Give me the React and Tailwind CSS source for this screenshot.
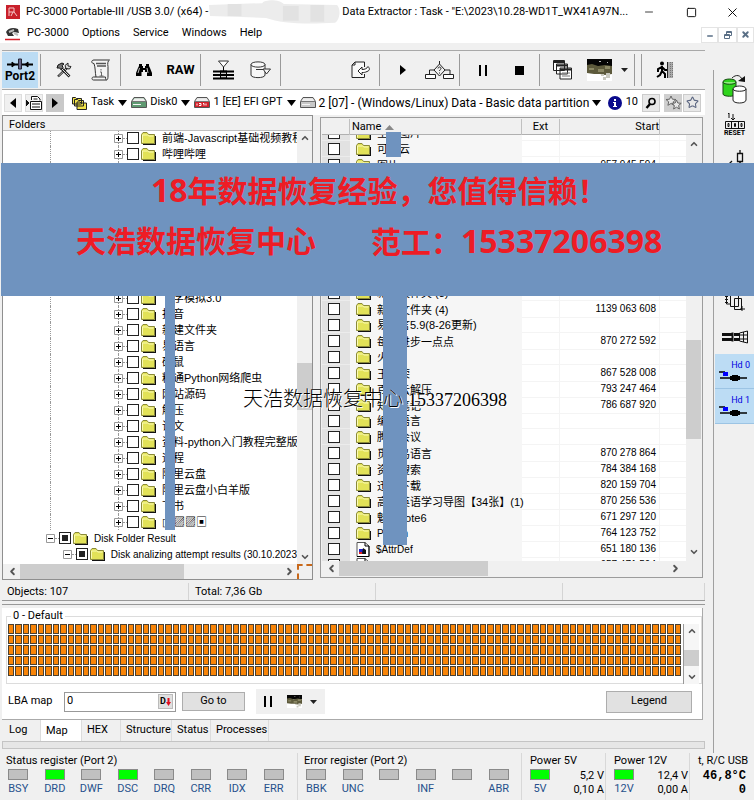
import React, { useState } from 'react';
import { Minus, Square, X, ChevronUp, ChevronDown, ChevronLeft, ChevronRight, Star } from 'lucide-react';

const treeRows = [
  "前端-Javascript基础视频教程", "哔哩哔哩", "", "", "", "", "", "", "", "",
  "飞学模拟3.0", "抖音", "新建文件夹", "易语言", "硕鼠", "精通Python网络爬虫", "网站源码",
  "解压", "论文", "资料-python入门教程完整版(", "远程", "阿里云盘", "阿里云盘小白羊版", "下书", "▯▯▨▨▣",
];

const fileRows = [
  { name: "全部图片" },
  { name: "可达云" },
  { name: "图片", start: "957 945 594" },
  {}, {}, {}, {}, {}, {}, {},
  { name: "新建文件夹 (3)" },
  { name: "新建文件夹 (4)", start: "1139 063 608" },
  { name: "易语言5.9(8-26更新)" },
  { name: "每天进步一点点", start: "870 272 592" },
  { name: "火山" },
  { name: "王者荣", start: "867 528 008" },
  { name: "百度云解压", start: "793 247 464" },
  { name: "知识笔记", start: "786 687 920" },
  { name: "编程语言" },
  { name: "腾讯会议" },
  { name: "觅乐鸟语言", start: "870 278 864" },
  { name: "资源搜索", start: "784 384 168" },
  { name: "迅雷下载", start: "820 159 704" },
  { name: "高中英语学习导图【34张】(1)", start: "870 256 536" },
  { name: "魅蓝note6", start: "671 297 120" },
  { name: "Python", start: "764 123 752", latin: true },
  { name: "$AttrDef", start: "651 180 136", latin: true, file: true },
  { name: "$BadClus", start: "657 471 594", latin: true, file: true },
];

const statusBits = [["BSY", false], ["DRD", true], ["DWF", false], ["DSC", true], ["DRQ", false], ["CRR", false], ["IDX", false], ["ERR", false]];
const errorBits = [["BBK"], ["UNC"], [""], ["INF"], [""], ["ABR"]];

/* ---------- icons ---------- */

const Folder = () => (
  <svg width="15" height="13" viewBox="0 0 15 13" className="shrink-0">
    <path d="M2 12.5h12.5V4" fill="none" stroke="#111" strokeWidth="1.4" />
    <path d="M.5 11.5V2.5L2 .5h4l1.500 2h6v9z" fill="#e2e258" stroke="#8a8a3a" />
    <path d="M1.500 10.500V3h5l1.500 1h4.500" fill="none" stroke="#fafab4" />
  </svg>
);

const FileIcon = () => (
  <svg width="14" height="15" viewBox="0 0 14 15" className="shrink-0">
    <path d="M1 .5h8l4 3.500V14.500H1z" fill="#fff" stroke="#555" />
    <path d="M9 .5V4h4M13 4v10.500H1" fill="none" stroke="#000" />
    <path d="M3 7h4v4H3z" fill="#2222c8" /><path d="M7 6l3 2v4H6z" fill="#111" /><path d="M3 10h3v2H3z" fill="#d22" />
  </svg>
);

const Caret = () => (
  <svg width="9" height="6" viewBox="0 0 9 6" className="shrink-0"><path d="M0 0h9L4.500 6z" fill="#000" /></svg>
);

const SmallCaret = () => (
  <svg width="7" height="4" viewBox="0 0 7 4" className="shrink-0"><path d="M0 0h7L3.500 4z" fill="#222" /></svg>
);

const Photo = ({ w = 25, h = 22 }) => (
  <svg width={w} height={h} viewBox="0 0 25 22" preserveAspectRatio="none">
    <path d="M0 0h25v22H0z" fill="#fff" />
    <path d="M0 0h25v7H0z" fill="#050505" />
    <path d="M0 6l5-1 6 2 7-1 7 1v8l-7 1-5-1-6 0-7-1z" fill="#5d5a3c" />
    <path d="M2 9h5v2H2zM11 10h6v3h-6zM18 7h5v3h-5z" fill="#8b8865" />
    <path d="M14 15h3v2h-3zM19 14h4v5h-4zM16 18h3v3h-3z" fill="#c9c9bf" />
    <path d="M12 2h2v1h-2zM20 3h1v1h-1z" fill="#bbb" />
  </svg>
);

const Drive = ({ color = "#c8c8c8", red }) => (
  <svg width="16" height="11" viewBox="0 0 16 11" className="shrink-0">
    <path d="M.5 4.500L3 .5h10l2.500 4v6H.5z" fill={color} stroke="#555" />
    <path d="M1.500 4L3.500 1.300h9L14.500 4z" fill="#eee" />
    <path d="M.5 4.500h15" stroke="#777" />
    {red ? <path d="M1 5h14v5H1z" fill="#d3202a" /> : <path d="M2 7.500h8" stroke="#f4f4f4" />}
    {red && <path d="M3 6.500v2M5 6.500h2v2H5M9 6.500h1v2M12 6.500v2" fill="none" stroke="#fff" />}
  </svg>
);

const PortIcon = () => (
  <svg width="26" height="12" viewBox="0 0 26 12" className="shrink-0">
    <path d="M0 6.500h26" stroke="#000" strokeWidth="2" />
    <path d="M5 4l3 2.500L5 9zM21 4l-3 2.500L21 9z" fill="#000" stroke="#000" />
    <path d="M11.500 1h3v10h-3z" fill="#668" stroke="#223" />
  </svg>
);

const Tools = () => (
  <svg width="16" height="16" viewBox="0 0 16 16" fill="none">
    <path d="M2 14.500L11 6" stroke="#222" strokeWidth="2.400" /><path d="M2.500 14L10 7" stroke="#eee" strokeWidth=".8" />
    <path d="M10 6.500L9 3.500 12 1v3l3 .500-1.500 2.500z" fill="#ddd" stroke="#222" />
    <path d="M5 6l8.500 8.500" stroke="#222" strokeWidth="2.600" /><path d="M6 7l7 7" stroke="#ddd" />
    <path d="M1 6l1-3 4-2 2 1-2 1.500 1 2-2 2-1.500-1.500z" fill="#777" stroke="#111" />
  </svg>
);

const Scroll = () => (
  <svg width="21" height="22" viewBox="0 0 21 22" fill="none" stroke="#333">
    <path d="M4 4.500C1 4.500 1 1 4 1h15.500c-2 1-2 4-1.500 6.500V17c0 4-1 4-2 4H3.500c-2 0-2-3 0-3H6c-1-5-.5-9-2-13.500z" fill="#f4f4f4" />
    <path d="M6 4.500h10M7 7h9" strokeWidth="1.500" stroke="#555" /><path d="M6 18h9.500c0 2 .5 3 1 3" />
    <path d="M11 10v1.500M10 13h1.500v4M9.500 17h4" stroke="#666" />
  </svg>
);

const Binoculars = () => (
  <svg width="16" height="14" viewBox="0 0 16 14">
    <path d="M3 1h3v2h1v2h2V3h1V1h3v2l1 2 2 5v3h-5V9H9V7H7v2H5.500v4H0v-3l2-5 1-2z" fill="#000" />
    <path d="M3.500 5L2 10M11 5l1 5" stroke="#eee" strokeWidth=".8" />
  </svg>
);

const Stack = () => (
  <svg width="21" height="20" viewBox="0 0 21 20">
    <path d="M5.500 1h10l-5 6z" fill="#fff" stroke="#333" />
    <path d="M10.500 7v4" stroke="#000" />
    <path d="M0 11.500h21M0 15h21M0 18.500h21" fill="none" stroke="#000" strokeWidth="2" />
    <path d="M7 10.500h7v8H7z" fill="#000" /><path d="M8 13.300h5M8 16.700h5" stroke="#fff" />
  </svg>
);

const CylArrow = () => (
  <svg width="21" height="18" viewBox="0 0 21 18" fill="none" stroke="#333">
    <path d="M1 3.500C1 0 15 0 15 3.500V14c0 3.500-14 3.500-14 0z" fill="#f7f7f7" /><path d="M1 3.500C1 7 15 7 15 3.500" />
    <path d="M6 8.500h7M13 8h7.500l-4 5z" fill="#f7f7f7" />
  </svg>
);

const PageArrow = () => (
  <svg width="20" height="18" viewBox="0 0 20 18" fill="none" stroke="#222">
    <path d="M13.500 6V1H4L1 4v12.500h12.500V13" fill="#f8f8f8" /><path d="M1 4h3V1" />
    <path d="M7 10l4-4v2.500c3 0 5-1 6-3 2 2 2 4-1 5-2 1-3 1-5 1V14z" fill="#fff" />
  </svg>
);

const FlowIcon = () => (
  <svg width="29" height="19" viewBox="0 0 29 19" fill="none" stroke="#222">
    <path d="M14.500 0v3M14.500 3L20 9l-5.500 6L9 9zM9 9H4.500v4M20 9h5v4" />
    <path d="M.5 13.500h10v4H.5zM18.500 13.500h10v4h-10z" fill="#fff" />
    <path d="M13 7.500c0-2 3-2 3 0 0 1-1.500 1-1.500 2.500M14.500 11.500v1" />
  </svg>
);

const WindowsIcon = () => (
  <svg width="19" height="20" viewBox="0 0 19 20" fill="#fff" stroke="#222">
    <path d="M.5.5h11v10H.5zM3.500 4h11v10h-11zM7 8h11.500v11H7z" />
    <path d="M.5 2h11M3.500 5.500h11M7 9.500h11.500" strokeWidth="2" /><path d="M9 13h8M9 16h8" stroke="#777" />
  </svg>
);

const ExitIcon = () => (
  <svg width="18" height="18" viewBox="0 0 18 18">
    <path d="M12 1h5v16h-5z" fill="#aaa" /><path d="M11.500 1v16" stroke="#222" /><path d="M14.500 1v16M16.500 1v16" stroke="#777" strokeDasharray="1 1" />
    <circle cx="6" cy="2.500" r="2" /><path d="M6 5v6M6 6L2 8v3M6 6l3 3h2M6 10l-2 4-3 2M6 10l3 3v4" fill="none" stroke="#000" strokeWidth="2" />
  </svg>
);

const Cylinders = () => (
  <svg width="25" height="29" viewBox="0 0 25 29">
    <path d="M10 3c4-4 9-3 10 2" fill="none" stroke="#222" /><path d="M16 6l7-5v6z" fill="#111" />
    <path d="M1 7c0-4 13-4 13 0v12c0 3-13 3-13 0z" fill="#2fd41c" stroke="#174c12" /><path d="M1 7c0 3 13 3 13 0" fill="#8df07c" stroke="#174c12" />
    <path d="M11 14c0-4 13-4 13 0v11c0 4-13 4-13 0z" fill="#fff" stroke="#222" /><path d="M11 14c0 3 13 3 13 0" fill="none" stroke="#222" />
  </svg>
);

const ResetTop = () => (
  <svg width="20" height="17" viewBox="0 0 20 17" fill="none" stroke="#111">
    <path d="M3 2l1-1v5M8 2v6M6 6l2 2 2-2" /><path d="M.5 9.500h19M.5 16.500h19M.5 9.500v7M6.500 9.500v7M13.500 9.500v7M19.500 9.500v7" />
    <path d="M3 11.500h1v3H3zM9.500 11.500h1v3h-1zM16 11.500h1v3h-1z" />
  </svg>
);

const Relay = () => (
  <svg width="22" height="20" viewBox="0 0 22 20" fill="none" stroke="#111">
    <path d="M16 0v3M13.500 3.500h5v8h-5zM16 12v3M0 15h4l4-4M11 15h11" strokeWidth="1.300" /><circle cx="16" cy="15" r="2" fill="#111" />
  </svg>
);

const Pages = () => (
  <svg width="20" height="20" viewBox="0 0 20 20" fill="#f0f0f0" stroke="#111">
    <path d="M1.500 1h8v11h-8z" /><path d="M0 4.500h3M0 7.500h3M0 10.500h3" /><path d="M5.500 3.500h8v11h-8zM9.500 6.500h7v11h-7z" /><path d="M17 14v5M15 17h5" />
  </svg>
);

const Connectors = () => (
  <svg width="26" height="14" viewBox="0 0 26 14" stroke="#111" fill="none">
    <path d="M0 4.500h10M0 9.500h10" strokeWidth="3" /><path d="M10.500 2.500v9" strokeWidth="2" /><path d="M12 4.500h6M12 9.500h6" strokeWidth="3" />
    <path d="M17.500 3l8-2v12l-8-2zM18 5h7M18 9h7M21.500 2v10" />
  </svg>
);

const HeadPlug = () => (
  <svg width="28" height="11" viewBox="0 0 28 11">
    <path d="M0 1h6M1 7h27" stroke="#000" strokeWidth="1.500" /><path d="M4 1h5v4H4z" fill="#00f" />
    <path d="M11 5h2V4h6v1h2v4h-2v1h-6V9h-2z" fill="#000" />
  </svg>
);

const TaskFolders = () => (
  <svg width="15" height="14" viewBox="0 0 15 14" fill="#f0e24a" stroke="#222">
    <path d="M.5 8V1.500h3l1 1h5V8zM2.500 10V3.500h3l1 1h5V10zM5 13.500V6h3l1 1h5.500v6.500z" />
  </svg>
);

const FindDoc = () => (
  <svg width="16" height="14" viewBox="0 0 16 14" fill="#fff" stroke="#111">
    <path d="M0 4l3 3-3 3z" fill="#111" /><path d="M5.500 4V.5h6L14 3v1.500M4.500 5.500h11v8h-11z" /><path d="M6 8h8M6 11h8M7.500 3h4" />
  </svg>
);

const PlayTri = ({ flip }) => (
  <svg width="6" height="10" viewBox="0 0 6 10"><path d={flip ? "M6 0v10L0 5z" : "M0 0v10l6-5z"} /></svg>
);

const Pause = () => (
  <svg width="8" height="11" viewBox="0 0 8 11"><path d="M0 0h2v11H0zM6 0h2v11H6z" /></svg>
);

/* ---------- small parts ---------- */

function ToolButton({ label, children }) {
  return (
    <button aria-label={label} className="w-[37px] h-9 flex items-center justify-center shrink-0">{children}</button>
  );
}

function ToolGroup({ children }) {
  return <div className="flex w-20 h-8 pl-1 items-center border-r border-[#9a9a9a] shrink-0">{children}</div>;
}

function Plus({ minus }) {
  return (
    <svg width="9" height="9" viewBox="0 0 9 9" className="shrink-0">
      <path d="M.5.5h8v8h-8z" fill="#fff" stroke="#999" />
      <path d={minus ? "M2 4.500h5" : "M2 4.500h5M4.500 2v5"} stroke="#000" />
    </svg>
  );
}

const tick = "appearance-none size-3 shrink-0 border border-[#222] bg-white";

function TreeRow({ name }) {
  return (
    <div className="flex h-4 items-center shrink-0">
      <span className="w-[47px] shrink-0" />
      <span className="w-16 self-stretch border-l border-dotted border-[#999] shrink-0" />
      <span className="w-[9px] self-stretch flex flex-col items-center shrink-0">
        <i className="flex-1 border-l border-dotted border-[#999]" />
        <Plus />
        <i className="flex-1 border-l border-dotted border-[#999]" />
      </span>
      <span className="w-1 border-t border-dotted border-[#999] shrink-0" />
      <input type="checkbox" aria-label={name || "folder"} className={tick} />
      <span className="ml-0.5 flex"><Folder /></span>
      <span className="ml-1.5 text-[11px] leading-4 whitespace-nowrap">{name}</span>
    </div>
  );
}

function Led({ on }) {
  return <span className={`w-5 h-[11px] border border-[#8a8a8a] ${on ? "bg-[#00ff00]" : "bg-[#c0c0c0]"}`} />;
}

function Register({ title, bits, cols, className }) {
  return (
    <section className={`flex flex-col border-r border-[#d8d8d8] ${className}`}>
      <h2 className="px-1.5 leading-4 whitespace-nowrap">{title}</h2>
      <div className={`grid ${cols}`}>
        {bits.map(([label, on], i) => (
          <div key={i} className="flex flex-col items-center gap-px">
            <Led on={on} />
            <span className="leading-4 text-[#27508c]">{label}</span>
          </div>
        ))}
      </div>
    </section>
  );
}

function Power({ title, volt, value, amps }) {
  return (
    <section className="w-21 flex flex-col pl-2 pr-px border-r border-[#d8d8d8]">
      <h2 className="leading-4 whitespace-nowrap">{title}</h2>
      <div className="flex justify-between">
        <div className="flex flex-col items-center gap-px">
          <Led on />
          <span className="leading-4 text-[#27508c]">{volt}</span>
        </div>
        <div className="text-right leading-[14px]"><p>{value}</p><p>{amps}</p></div>
      </div>
    </section>
  );
}

export default function App() {
  const [tab, setTab] = useState("Map");
  const [lba, setLba] = useState("0");

  return (
    <div className="relative flex flex-col w-full h-screen overflow-hidden bg-[#f0f0f0] text-black text-[11px] font-['Roboto','Noto_Sans_CJK_SC',sans-serif]">

      {/* title bar */}
      <header className="flex items-center h-6 pl-1.5 bg-white shrink-0 whitespace-nowrap">
        <svg width="14" height="14" viewBox="0 0 14 14" className="shrink-0">
          <path d="M0 0h14v14H0z" fill="#c9202b" /><path d="M3 11V3h5v4l3 4M3 7h5M5 11l2-4" fill="none" stroke="#f6c9cb" />
        </svg>
        <span className="ml-1.5">PC-3000 Portable-III /USB 3.0/ (x64) -</span>
        <svg width="134" height="24" viewBox="0 0 136 24" className="shrink-0">
          <path d="M1 5l54-2c3-4 18-4 22 1l54 1c4 4 3 15-2 18-35 2-55 0-70-5L2 16z" fill="#ececec" />
          <path d="M20 4h14v12H20zM76 6h16v15H76zM104 5h14v17h-14z" fill="#e2e2e2" />
        </svg>
        <span>Data Extractor : Task - "E:\2023\10.28-WD1T_WX41A97N...</span>
        <div className="ml-auto pr-1 flex items-center">
          <button aria-label="Minimize" className="w-[42px] flex justify-center"><Minus size={12} strokeWidth={1.500} /></button>
          <button aria-label="Maximize" className="w-[42px] flex justify-center"><Square size={11} strokeWidth={2} /></button>
          <button aria-label="Close" className="w-10 flex justify-center"><X size={15} strokeWidth={1.500} /></button>
        </div>
      </header>

      {/* menu */}
      <nav className="flex items-center h-[19px] pl-[5px] bg-white shrink-0">
        <svg width="15" height="14" viewBox="0 0 15 14" className="shrink-0">
          <path d="M1 5c2-4 7-5 12-3l1 4-5-1-2 1 2 3H3z" fill="#333" /><path d="M4 5l5-2M9 6l4 2" stroke="#bbb" strokeWidth="2" /><path d="M0 12.500h15" stroke="#d5202b" strokeWidth="1.500" />
        </svg>
        <div className="flex ml-[7px] gap-[13px]">
          {["PC-3000", "Options", "Service", "Windows", "Help"].map(m => <button key={m}>{m}</button>)}
        </div>
        <div className="ml-auto flex h-4 mt-0.5 text-[#5a6f86]">
          <button aria-label="Minimize task" className="w-[17px] border border-[#e4e4e4] flex items-end justify-center pb-0.5"><Minus size={8} strokeWidth={4} /></button>
          <button aria-label="Restore task" className="w-[19px] border border-[#e4e4e4] flex items-center justify-center">
            <svg width="8" height="8" viewBox="0 0 8 8" fill="#fff" stroke="currentColor"><path d="M2.500.5h5v4h-5zM.5 3.500h5v4h-5zM2.500 1.500h5M.5 4.500h5" /></svg>
          </button>
          <button aria-label="Close task" className="w-[17px] border border-[#e4e4e4] flex items-center justify-center"><X size={9} strokeWidth={5} /></button>
        </div>
      </nav>

      <div className="flex flex-1 min-h-0">
        <main className="flex flex-col flex-1 min-w-0 pt-[7px] pl-0.5">

          {/* toolbar */}
          <div className="flex items-center h-10 border-t border-b border-[#a8a8a8] shrink-0">
            <button className="w-9 h-9 flex flex-col items-center justify-center bg-[#bcdcf4] text-xs leading-3 font-bold whitespace-nowrap shrink-0"><PortIcon />Port2</button>
            <div className="w-[3px] h-8 border-r border-[#9a9a9a]" />
            <ToolGroup>
              <ToolButton label="Utilities"><Tools /></ToolButton>
              <ToolButton label="Info"><Scroll /></ToolButton>
            </ToolGroup>
            <ToolGroup>
              <ToolButton label="Find"><Binoculars /></ToolButton>
              <button className="w-[37px] h-9 text-[13px] font-bold">RAW</button>
            </ToolGroup>
            <ToolGroup>
              <ToolButton label="Heads"><Stack /></ToolButton>
              <ToolButton label="Copy disk"><CylArrow /></ToolButton>
            </ToolGroup>
            <div className="flex flex-1 h-8 items-center justify-end border-r border-[#9a9a9a]">
              <ToolButton label="Export"><PageArrow /></ToolButton>
            </div>
            <ToolGroup>
              <ToolButton label="Start"><PlayTri /></ToolButton>
              <ToolButton label="Flow"><FlowIcon /></ToolButton>
            </ToolGroup>
            <ToolGroup>
              <ToolButton label="Pause"><Pause /></ToolButton>
              <ToolButton label="Stop"><svg width="9" height="9" viewBox="0 0 9 9"><path d="M0 0h9v9H0z" /></svg></ToolButton>
            </ToolGroup>
            <div className="flex w-[95px] h-8 pl-1 items-center border-r border-[#9a9a9a] shrink-0">
              <ToolButton label="Windows"><WindowsIcon /></ToolButton>
              <ToolButton label="Map picture"><Photo /></ToolButton>
              <button aria-label="Picture menu" className="w-3 h-9 flex items-center justify-center"><SmallCaret /></button>
            </div>
            <div className="w-[7px] h-8 border-r border-[#9a9a9a] shrink-0" />
            <div className="flex w-[63px] pl-1 shrink-0"><ToolButton label="Exit"><ExitIcon /></ToolButton></div>
          </div>

          {/* object path */}
          <div className="flex items-center h-[25px] bg-white whitespace-nowrap shrink-0">
            <div className="flex gap-[3px] pl-0.5">
              <button aria-label="Back" className="size-[18px] border border-[#ddd] bg-[#f0f0f0] flex items-center justify-center"><PlayTri flip /></button>
              <button aria-label="Go to object" className="size-[18px] border border-[#ddd] bg-[#f0f0f0] flex items-center justify-center"><FindDoc /></button>
              <button aria-label="Forward" className="size-[18px] bg-[#c9c9c9] flex items-center justify-center"><PlayTri /></button>
            </div>
            <button className="ml-2 flex items-center gap-1"><TaskFolders />Task<Caret /></button>
            <button className="ml-1 flex items-center gap-[3px]"><Drive color="#5f9a72" />Disk0<Caret /></button>
            <button className="ml-1 flex items-center gap-1"><Drive red />1 [EE] EFI GPT<Caret /></button>
            <button className="ml-1 flex items-center gap-[3px]"><Drive /><span className="text-xs">2 [07] - (Windows/Linux) Data - Basic data partition</span><Caret /></button>
            <div className="ml-auto flex items-center pr-1">
              <svg width="14" height="14" viewBox="0 0 14 14"><circle cx="7" cy="7" r="7" fill="#0a0a8c" /><path d="M6 3h2v2H6zM5 6h3v4h1v1H5v-1h1V7H5z" fill="#fff" /></svg>
              <span className="ml-1 mr-1">10</span>
              <button aria-label="Search" className="size-[18px] mr-1 border border-[#ccc] bg-[#e8e8e8] flex items-center justify-center">
                <svg width="12" height="12" viewBox="0 0 12 12" fill="none" stroke="#000"><circle cx="7" cy="4.500" r="3" strokeWidth="1.600" /><path d="M5 7L1.500 11" strokeWidth="2.400" /></svg>
              </button>
              <button aria-label="Favourites" className="size-[18px] mr-px bg-[#cfcfcf] flex items-center justify-center">
                <svg width="17" height="16" viewBox="0 0 17 16" fill="#e8e8e8" stroke="#666"><path d="M6 1l1.400 3.200 3.600.3-2.700 2.300.8 3.500L6 8.500 2.900 10.300l.8-3.500L1 4.500l3.600-.3z" /><path d="M11.500 5l1.300 3 3.400.3-2.600 2.200.8 3.500-2.900-1.800L8.600 14l.8-3.500-2.600-2.200L10.200 8z" /></svg>
              </button>
              <button aria-label="Add star" className="size-[18px] border border-[#ccc] bg-[#e8e8e8] flex items-center justify-center"><Star size={13} strokeWidth={2} className="text-[#5a6580]" /></button>
            </div>
          </div>

          {/* folders + files */}
          <div className="flex flex-1 min-h-0">
            <section className="flex flex-col w-[311px] shrink-0 border border-[#8f8f8f] bg-white">
              <h2 className="h-[15px] pl-1.5 leading-[17px] bg-[#f0f0f0] border-b border-[#c0c0c0] shrink-0">Folders</h2>
              <div className="flex flex-1 min-h-0">
                <div className="flex-1 min-w-0 overflow-hidden">
                  <div className="-mt-px flex flex-col font-['Liberation_Sans','Noto_Sans_CJK_SC',sans-serif]">
                    {treeRows.map((r, i) => <TreeRow key={i} name={r} />)}
                    <div className="flex h-4 items-center pl-[43px] text-[10px] whitespace-nowrap shrink-0">
                      <Plus minus /><span className="w-1 border-t border-dotted border-[#999]" />
                      <input type="checkbox" defaultChecked aria-label="Disk Folder Result" className={`${tick} checked:bg-[#222] checked:shadow-[inset_0_0_0_2px_white]`} />
                      <span className="ml-0.5 mr-1.5"><Folder /></span>Disk Folder Result
                    </div>
                    <div className="flex h-4 items-center pl-[60px] text-[10px] whitespace-nowrap shrink-0">
                      <Plus minus /><span className="w-1 border-t border-dotted border-[#999]" />
                      <input type="checkbox" defaultChecked aria-label="Attempt results" className={`${tick} checked:bg-[#222] checked:shadow-[inset_0_0_0_2px_white]`} />
                      <span className="ml-0.5 mr-1.5"><Folder /></span>Disk analizing attempt results (30.10.2023
                    </div>
                    <div className="flex h-4 items-center pl-[77px] text-[10px] whitespace-nowrap shrink-0">
                      <Plus /><span className="w-1 border-t border-dotted border-[#999]" />
                      <input type="checkbox" aria-label="NTFS boot" className={tick} />
                      <span className="ml-1 mr-2 size-3 rounded-full border-2 border-[#1414a0]" />1007 - NTFS (Boot, NTFS Search) (Fil
                    </div>
                  </div>
                </div>
                <div className="w-[15px] flex flex-col items-center justify-between py-0.5 bg-[#f0f0f0] text-[#555]">
                  <ChevronUp size={10} strokeWidth={4} />
                  <div className="flex flex-col flex-1 w-full">
                    <div className="flex-[220]" /><div className="h-[47px] bg-[#cdcdcd]" /><div className="flex-[142]" />
                  </div>
                  <ChevronDown size={10} strokeWidth={4} />
                </div>
              </div>
              <div className="flex h-[15px] bg-[#f0f0f0] text-[#555] shrink-0">
                <div className="flex flex-1 items-center pl-1 pr-0.5">
                  <ChevronLeft size={11} strokeWidth={4} />
                  <div className="flex flex-1 pl-0.5 self-stretch"><div className="w-[62%] bg-[#cdcdcd]" /></div>
                  <ChevronRight size={11} strokeWidth={4} />
                </div>
                <div className="w-[15px] border-t-2 border-l-2 border-dashed border-[#c8681a]" />
              </div>
            </section>

            <section className="flex flex-col flex-1 min-w-0 ml-[7px] mr-0.5 my-0.5 border border-[#9c9c9c] bg-[#f0f0f0] p-px">
              <div className="flex flex-1 min-h-0">
                <table className="flex flex-col flex-1 min-w-0 font-['Liberation_Sans','Noto_Sans_CJK_SC',sans-serif]">
                  <thead className="block shrink-0 font-['Roboto',sans-serif]">
                    <tr className="grid grid-cols-[28px_172px_38px_1fr_26px] h-4 border-b border-[#b0b0b0] leading-4">
                      <th className="border-r border-[#c0c0c0]" />
                      <th className="flex items-center gap-1 pl-0.5 font-normal border-r border-[#c0c0c0]">Name
                        <svg width="9" height="5" viewBox="0 0 9 5"><path d="M0 5h9L4.500 0z" fill="#888" /></svg>
                      </th>
                      <th className="font-normal border-r border-[#c0c0c0]">Ext</th>
                      <th className="font-normal text-right border-r border-[#c0c0c0]">Start</th>
                      <th />
                    </tr>
                  </thead>
                  <tbody className="block flex-1 min-h-0 overflow-hidden bg-white">
                    {fileRows.map((f, i) => (
                      <tr key={i} className="grid grid-cols-[28px_172px_38px_1fr_26px] h-4 first:-mt-2.5">
                        <td className="flex items-center pl-1.5 bg-[#e2e2e2] border-b border-[#ececec]"><input type="checkbox" aria-label={f.name || "item"} className={tick} /></td>
                        <td className={`flex items-center gap-1.5 pl-1.5 bg-[#f6f6f6] leading-4 whitespace-nowrap ${f.latin ? "text-[10px]" : "text-[11px]"}`}>
                          {f.file ? <FileIcon /> : <Folder />}{f.name}
                        </td>
                        <td className="border-b border-r border-[#f4f4f4]" />
                        <td className="border-b border-r border-[#f4f4f4] pr-[3px] text-right text-[10px] leading-4">{f.start}</td>
                        <td className="border-b border-[#f4f4f4]" />
                      </tr>
                    ))}
                  </tbody>
                </table>
                <div className="w-[15px] flex flex-col">
                  <div className="h-4 border-b border-[#b0b0b0]" />
                  <div className="flex flex-col flex-1 items-center py-1 text-[#555]">
                    <ChevronUp size={10} strokeWidth={4} />
                    <div className="flex flex-col flex-1 w-full">
                      <div className="flex-[191]" /><div className="h-[99px] bg-[#cdcdcd]" /><div className="flex-[108]" />
                    </div>
                    <ChevronDown size={10} strokeWidth={4} />
                  </div>
                </div>
              </div>
              <div className="flex items-center h-[15px] pl-1 pr-5 text-[#555] shrink-0">
                <ChevronLeft size={11} strokeWidth={4} />
                <div className="flex flex-1 pl-0.5 self-stretch"><div className="w-[45%] bg-[#cdcdcd]" /></div>
                <ChevronRight size={11} strokeWidth={4} />
              </div>
            </section>
          </div>

          {/* status bar */}
          <div className="grid grid-cols-[187px_187px_187px_1fr] h-[17px] mt-[3px] leading-[18px] shrink-0">
            <span className="pl-[5px] border-r border-[#d4d4d4]">Objects: 107</span>
            <span className="pl-1.5 border-r border-[#d4d4d4]">Total: 7,36 Gb</span>
            <span className="border-r border-[#d4d4d4]" />
            <span className="border-r border-[#d4d4d4]" />
          </div>
          <div className="h-[5px] border-t border-b border-[#999] shrink-0" />

          {/* map */}
          <section className="flex flex-col h-28 mt-[3px] mr-0.5 bg-white border-b border-r border-[#aaa] shrink-0">
            <fieldset className="h-[76px] ml-1 border border-[#dcdcdc]">
              <legend className="ml-1 px-0.5 leading-4">0 - Default</legend>
              <div className="flex w-full h-[60px]">
                <div className="flex-1 grid grid-cols-[repeat(90,minmax(0,1fr))] gap-x-px gap-y-px h-[52px] pl-px pr-0.5">
                  {Array.from({ length: 450 }, (_, i) => <i key={i} className="bg-[#f98508] border border-[#4a4030]" />)}
                </div>
                <div className="w-4 mr-0.5 flex flex-col items-center justify-between py-0.5 border-l border-[#999] bg-[#f6f6f6] text-[#555]">
                  <ChevronUp size={10} strokeWidth={4} />
                  <div className="w-full h-4 mt-2 bg-[#cdcdcd]" />
                  <ChevronDown size={10} strokeWidth={4} />
                </div>
              </div>
            </fieldset>
            <div className="flex items-center flex-1 pl-1.5 pr-2.5">
              <label htmlFor="lba" className="w-14">LBA map</label>
              <div className="flex items-center w-28 h-5 border border-[#999]">
                <input id="lba" value={lba} onChange={e => setLba(e.target.value)} className="flex-1 min-w-0 pl-0.5 outline-none" />
                <button aria-label="Decimal" className="flex items-center w-[15px] h-[15px] mr-0.5 pl-px bg-[#e0e0e0] border border-[#bbb] text-[9px] font-bold">D
                  <svg width="5" height="8" viewBox="0 0 5 8"><path d="M1.500 0h2v4H5L2.500 8 0 4h1.500z" fill="#e01020" /></svg>
                </button>
              </div>
              <button className="w-[63px] h-[19px] ml-1.5 bg-[#e1e1e1] border border-[#adadad]">Go to</button>
              <div className="flex items-center h-[25px] ml-[11px] w-[69px] pl-2 bg-[#f0f0f0]">
                <button aria-label="Pause map"><Pause /></button>
                <button aria-label="Map colours" className="ml-[15px]"><Photo w={15} h={13} /></button>
                <button aria-label="Map colours menu" className="ml-2"><SmallCaret /></button>
              </div>
              <button className="w-[86px] h-[22px] ml-auto bg-[#e1e1e1] border border-[#adadad]">Legend</button>
            </div>
          </section>

          <div role="tablist" className="flex h-[21px] pl-0.5 shrink-0">
            {[["Log", "w-[37px]"], ["Map", "w-[41px]"], ["HEX", "w-[39px]"], ["Structure", "w-[51px]"], ["Status", "w-[39px]"], ["Processes", "w-[58px]"]].map(([t, w]) => (
              <button key={t} role="tab" aria-selected={tab === t} onClick={() => setTab(t)}
                className={`${w} pl-[5px] text-left whitespace-nowrap border-r border-[#dcdcdc] ${tab === t ? "bg-white pt-0.5" : ""}`}>{t}</button>
            ))}
          </div>
          <div className="h-2 mb-1 border border-[#c4c4c4] bg-[#e6e6e6] shrink-0" />
        </main>

        {/* right hand tools */}
        <aside className="w-[41px] ml-2 mt-[27px] pt-0.5 pl-px border-l border-[#a0a0a0] flex flex-col shrink-0">
          <button aria-label="Disks" className="h-[35px] flex items-center justify-center"><Cylinders /></button>
          <button className="h-[35px] flex flex-col items-center justify-center text-[7px] leading-[8px] font-bold"><ResetTop />RESET</button>
          <button aria-label="Relay" className="h-[35px] flex items-center justify-center"><Relay /></button>
          <div className="h-[107px]" />
          <button aria-label="Pages" className="h-[35px] flex items-center justify-center"><Pages /></button>
          <button aria-label="Connectors" className="h-[35px] flex items-center justify-center"><Connectors /></button>
          {["Hd 0", "Hd 1"].map(h => (
            <button key={h} className="h-[35px] pr-1 flex flex-col items-center justify-center bg-[#bcdcf4] border-b border-[#9cc4e4] text-[9px] leading-[11px] text-[#0000e0]">
              <span className="self-end">{h}</span><HeadPlug />
            </button>
          ))}
        </aside>
      </div>

      {/* registers */}
      <footer className="flex h-[47px] shrink-0">
        <Register title="Status register (Port 2)" bits={statusBits} cols="grid-cols-8 w-[292px]" className="w-[298px] shrink-0" />
        <Register title="Error register (Port 2)" bits={errorBits} cols="grid-cols-6" className="flex-1 pr-1" />
        <Power title="Power 5V" volt="5V" value="5,2 V" amps="0,10 A" />
        <Power title="Power 12V" volt="12V" value="12,4 V" amps="0,00 A" />
        <section className="w-16 pl-2 pr-2 text-right whitespace-nowrap">
          <h2 className="leading-4 flex">t, R/C USB</h2>
          <div className="text-xs leading-[14px] font-bold font-['Liberation_Mono',monospace]"><p>46,8°C</p><p>0</p></div>
        </section>
      </footer>

      {/* cover strips and banner */}
      <div className="absolute left-[386px] top-[132px] w-[15px] h-[25px] bg-[#6f93bf]" />
      <div className="absolute left-[165px] top-[296px] w-2.5 h-[234px] bg-[#6f93bf]" />
      <div className="absolute left-[383px] top-[296px] w-6 h-[249px] bg-[#6f93bf]" />
      <div className="absolute left-px right-0 top-[163px] h-[133px] pt-0.5 bg-[#6f93bf] text-[#ee1c25] text-[30px] leading-[50px] font-bold whitespace-nowrap font-['Noto_Sans','Noto_Sans_CJK_SC',sans-serif]">
        <p className="pl-[150px]"><span className="text-[32px]">18</span>年数据恢复经验，您值得信赖！</p>
        <p className="pl-[75px] flex"><span className="w-[295px]">天浩数据恢复中心</span><span>范工：<span className="text-[32px]">15337206398</span></span></p>
      </div>
      <p className="absolute left-[243px] top-[387px] text-[20px] leading-6 whitespace-nowrap font-light font-['Liberation_Serif','Noto_Sans_CJK_SC',serif] [text-shadow:0_0_1px_white,1px_1px_0_white]">
        天浩数据恢复中心 <span className="text-[18px]">15337206398</span>
      </p>
    </div>
  );
}
